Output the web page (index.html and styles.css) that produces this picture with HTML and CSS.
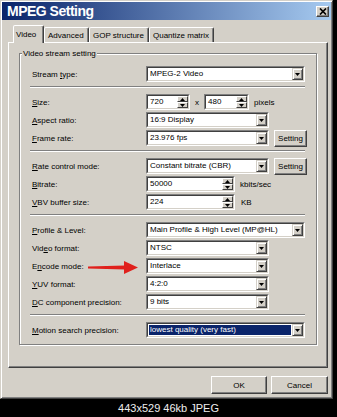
FILE: index.html
```html
<!DOCTYPE html>
<html>
<head>
<meta charset="utf-8">
<link rel="stylesheet" href="styles.css">
</head>
<body>
<div class="window">
  <div class="titlebar">
    <span class="title">MPEG Setting</span>
    <span class="close"><svg width="8" height="7" viewBox="0 0 8 7"><path d="M1 0.5L7 6.5M7 0.5L1 6.5" stroke="#000" stroke-width="1.7"/></svg></span>
  </div>
  <div class="tabs">
    <div class="tab active t-video">Video</div>
    <div class="tab t-adv">Advanced</div>
    <div class="tab t-gop">GOP structure</div>
    <div class="tab t-quant">Quantize matrix</div>
  </div>
  <div class="panel">
    <div class="group">
      <span class="group-caption">Video stream setting</span>

      <div class="row">
        <span class="label">Stream <u>t</u>ype:</span>
        <div class="combo w-long"><div class="field"><span class="val">MPEG-2 Video</span><span class="ddbtn"><svg width="5" height="3"><path d="M0 0H5L2.5 3Z"/></svg></span></div></div>
      </div>
      <div class="sep"></div>

      <div class="row">
        <span class="label"><u>S</u>ize:</span>
        <div class="combo w-spin-s"><div class="field"><span class="val">720</span><span class="spinbtns"><span class="sb"><svg width="5" height="3"><path d="M0 3H5L2.5 0Z"/></svg></span><span class="sb"><svg width="5" height="3"><path d="M0 0H5L2.5 3Z"/></svg></span></span></div></div>
        <span class="times">x</span>
        <div class="combo w-spin-s2"><div class="field"><span class="val">480</span><span class="spinbtns"><span class="sb"><svg width="5" height="3"><path d="M0 3H5L2.5 0Z"/></svg></span><span class="sb"><svg width="5" height="3"><path d="M0 0H5L2.5 3Z"/></svg></span></span></div></div>
        <span class="unit u-pixels">pixels</span>
      </div>
      <div class="row">
        <span class="label"><u>A</u>spect ratio:</span>
        <div class="combo w-mid"><div class="field"><span class="val">16:9 Display</span><span class="ddbtn"><svg width="5" height="3"><path d="M0 0H5L2.5 3Z"/></svg></span></div></div>
      </div>
      <div class="row">
        <span class="label"><u>F</u>rame rate:</span>
        <div class="combo w-mid"><div class="field"><span class="val">23.976 fps</span><span class="ddbtn"><svg width="5" height="3"><path d="M0 0H5L2.5 3Z"/></svg></span></div></div>
        <span class="btn setting">Setting</span>
      </div>
      <div class="sep"></div>

      <div class="row">
        <span class="label"><u>R</u>ate control mode:</span>
        <div class="combo w-mid"><div class="field"><span class="val">Constant bitrate (CBR)</span><span class="ddbtn"><svg width="5" height="3"><path d="M0 0H5L2.5 3Z"/></svg></span></div></div>
        <span class="btn setting">Setting</span>
      </div>
      <div class="row">
        <span class="label"><u>B</u>itrate:</span>
        <div class="combo w-spin-w"><div class="field"><span class="val">50000</span><span class="spinbtns"><span class="sb"><svg width="5" height="3"><path d="M0 3H5L2.5 0Z"/></svg></span><span class="sb"><svg width="5" height="3"><path d="M0 0H5L2.5 3Z"/></svg></span></span></div></div>
        <span class="unit u-kbits">kbits/sec</span>
      </div>
      <div class="row">
        <span class="label"><u>V</u>BV buffer size:</span>
        <div class="combo w-spin-w"><div class="field"><span class="val">224</span><span class="spinbtns"><span class="sb"><svg width="5" height="3"><path d="M0 3H5L2.5 0Z"/></svg></span><span class="sb"><svg width="5" height="3"><path d="M0 0H5L2.5 3Z"/></svg></span></span></div></div>
        <span class="unit u-kb">KB</span>
      </div>
      <div class="sep"></div>

      <div class="row">
        <span class="label"><u>P</u>rofile &amp; Level:</span>
        <div class="combo w-long"><div class="field"><span class="val">Main Profile &amp; High Level (MP@HL)</span><span class="ddbtn"><svg width="5" height="3"><path d="M0 0H5L2.5 3Z"/></svg></span></div></div>
      </div>
      <div class="row">
        <span class="label">Vid<u>e</u>o format:</span>
        <div class="combo w-mid"><div class="field"><span class="val">NTSC</span><span class="ddbtn"><svg width="5" height="3"><path d="M0 0H5L2.5 3Z"/></svg></span></div></div>
      </div>
      <div class="row">
        <span class="label">E<u>n</u>code mode:</span>
        <div class="combo w-mid"><div class="field"><span class="val">Interlace</span><span class="ddbtn"><svg width="5" height="3"><path d="M0 0H5L2.5 3Z"/></svg></span></div></div>
        <svg class="arrow" width="50" height="13" viewBox="0 0 50 13"><path d="M0 5.5L37 4.5V8.5L0 7.5Z" fill="#e0201c"/><path d="M36 0L50 6.5L36 13Z" fill="#e0201c"/></svg>
      </div>
      <div class="row">
        <span class="label"><u>Y</u>UV format:</span>
        <div class="combo w-mid"><div class="field"><span class="val">4:2:0</span><span class="ddbtn"><svg width="5" height="3"><path d="M0 0H5L2.5 3Z"/></svg></span></div></div>
      </div>
      <div class="row">
        <span class="label"><u>D</u>C component precision:</span>
        <div class="combo w-mid"><div class="field"><span class="val">9 bits</span><span class="ddbtn"><svg width="5" height="3"><path d="M0 0H5L2.5 3Z"/></svg></span></div></div>
      </div>
      <div class="sep"></div>

      <div class="row">
        <span class="label"><u>M</u>otion search precision:</span>
        <div class="combo w-long"><div class="field"><span class="val selected">lowest quality (very fast)</span><span class="ddbtn"><svg width="5" height="3"><path d="M0 0H5L2.5 3Z"/></svg></span></div></div>
      </div>
    </div>
  </div>
  <div class="buttons">
    <span class="btn ok">OK</span>
    <span class="btn cancel">Cancel</span>
  </div>
</div>
<div class="caption">443x529 46kb JPEG</div>
</body>
</html>
```
FILE: styles.css
```css
* { box-sizing: border-box; }
html, body { margin: 0; padding: 0; }
body {
  background: #000;
  width: 337px;
  height: 417px;
  overflow: hidden;
  font-family: "Liberation Sans", Arial, sans-serif;
  font-size: 8px;
  color: #000;
}
u { text-decoration: underline; text-underline-offset: 1px; }

.window {
  width: 333px;
  height: 399px;
  background: #d4d0c8;
  border: 1px solid;
  border-color: #d4d0c8 #404040 #404040 #d4d0c8;
  box-shadow: inset 1px 1px 0 #fff, inset -1px -1px 0 #808080;
  padding: 1px;
  display: flex;
  flex-direction: column;
}

.titlebar {
  height: 18px;
  flex: 0 0 18px;
  background: linear-gradient(to right, #0a246a, #a6caf0);
  display: flex;
  align-items: center;
  padding: 0 2px 0 5px;
}
.title {
  flex: 1;
  color: #fff;
  font-weight: bold;
  font-size: 14px;
  letter-spacing: -0.5px;
}
.close {
  width: 13px;
  height: 11px;
  background: #d4d0c8;
  border: 1px solid;
  border-color: #fff #404040 #404040 #fff;
  box-shadow: inset -1px -1px 0 #808080;
  display: flex;
  align-items: center;
  justify-content: center;
}

.tabs {
  display: flex;
  align-items: flex-end;
  height: 17px;
  flex: 0 0 17px;
  margin: 5px 0 0 11px;
  position: relative;
  z-index: 1;
}
.tab {
  height: 15px;
  border: 1px solid;
  border-bottom: none;
  border-color: #fff #404040 transparent #fff;
  box-shadow: inset -1px 0 0 #808080;
  border-radius: 2px 2px 0 0;
  display: flex;
  align-items: center;
  padding-left: 3px;
  background: #d4d0c8;
  white-space: nowrap;
}
.tab.active { height: 18px; margin-bottom: -1px; padding-left: 2px; }
.t-video { width: 31px; }
.t-adv { width: 45px; }
.t-gop { width: 60px; }
.t-quant { width: 65px; }

.panel {
  margin-left: 6px;
  width: 320px;
  height: 326px;
  flex: 0 0 326px;
  border: 1px solid;
  border-color: #fff #404040 #404040 #fff;
  box-shadow: inset -1px -1px 0 #808080;
  padding: 10px 0 0 10px;
}

.group {
  position: relative;
  width: 298px;
  height: 292px;
  border: 1px solid #808080;
  box-shadow: 1px 1px 0 #fff, inset 1px 1px 0 #fff;
  padding-top: 11px;
}
.group-caption {
  position: absolute;
  left: 2px;
  top: -6px;
  padding: 0 1px;
  line-height: 11px;
  background: #d4d0c8;
}

.row {
  position: relative;
  display: flex;
  align-items: center;
  height: 18px;
  padding-left: 12px;
  white-space: nowrap;
}
.label { flex: 0 0 114px; }
.sep {
  height: 2px;
  margin: 3px 11px 5px 10px;
  border-top: 1px solid #808080;
  border-bottom: 1px solid #fff;
}

.combo {
  height: 16px;
  border: 1px solid;
  border-color: #808080 #fff #fff #808080;
  display: flex;
}
.field {
  flex: 1;
  display: flex;
  align-items: center;
  border: 1px solid;
  border-color: #404040 #d4d0c8 #d4d0c8 #404040;
  background: #fff;
  min-width: 0;
}
.val {
  flex: 1;
  padding-left: 2px;
  overflow: hidden;
  height: 12px;
  line-height: 12px;
}
.val.selected {
  margin: 1px 1px 1px 1px;
  height: 10px;
  line-height: 10px;
  padding-left: 1px;
  background: #0a246a;
  color: #fff;
}
.ddbtn {
  flex: 0 0 11px;
  height: 12px;
  border: 1px solid;
  border-color: #d4d0c8 #404040 #404040 #d4d0c8;
  box-shadow: inset 1px 1px 0 #fff, inset -1px -1px 0 #808080;
  background: #d4d0c8;
  display: flex;
  align-items: center;
  justify-content: center;
}
.spinbtns {
  flex: 0 0 11px;
  height: 12px;
  display: flex;
  flex-direction: column;
}
.sb {
  flex: 1;
  border: 1px solid;
  border-color: #fff #404040 #404040 #fff;
  background: #d4d0c8;
  display: flex;
  align-items: center;
  justify-content: center;
}
svg path { shape-rendering: geometricPrecision; }

.w-long { width: 159px; }
.w-mid { width: 123px; }
.w-spin-s { width: 44px; }
.w-spin-s2 { width: 45px; }
.w-spin-w { width: 89px; }

.times { margin: 0 5px 0 5px; }
.unit { margin-left: 5px; }
.u-kb { margin-left: 6px; }

.btn {
  display: flex;
  align-items: center;
  justify-content: center;
  background: #d4d0c8;
  border: 1px solid;
  border-color: #fff #404040 #404040 #fff;
  box-shadow: inset -1px -1px 0 #808080;
}
.setting { width: 33px; height: 17px; margin-left: 5px; }

.arrow { position: absolute; left: 68px; top: 4px; }

.buttons {
  display: flex;
  justify-content: flex-end;
  gap: 4px;
  margin-top: 8px;
  padding-right: 3px;
}
.ok { width: 56px; height: 18px; }
.cancel { width: 57px; height: 18px; }

.caption {
  height: 18px;
  line-height: 18px;
  text-align: center;
  color: #eee;
  font-size: 11px;
}
```
